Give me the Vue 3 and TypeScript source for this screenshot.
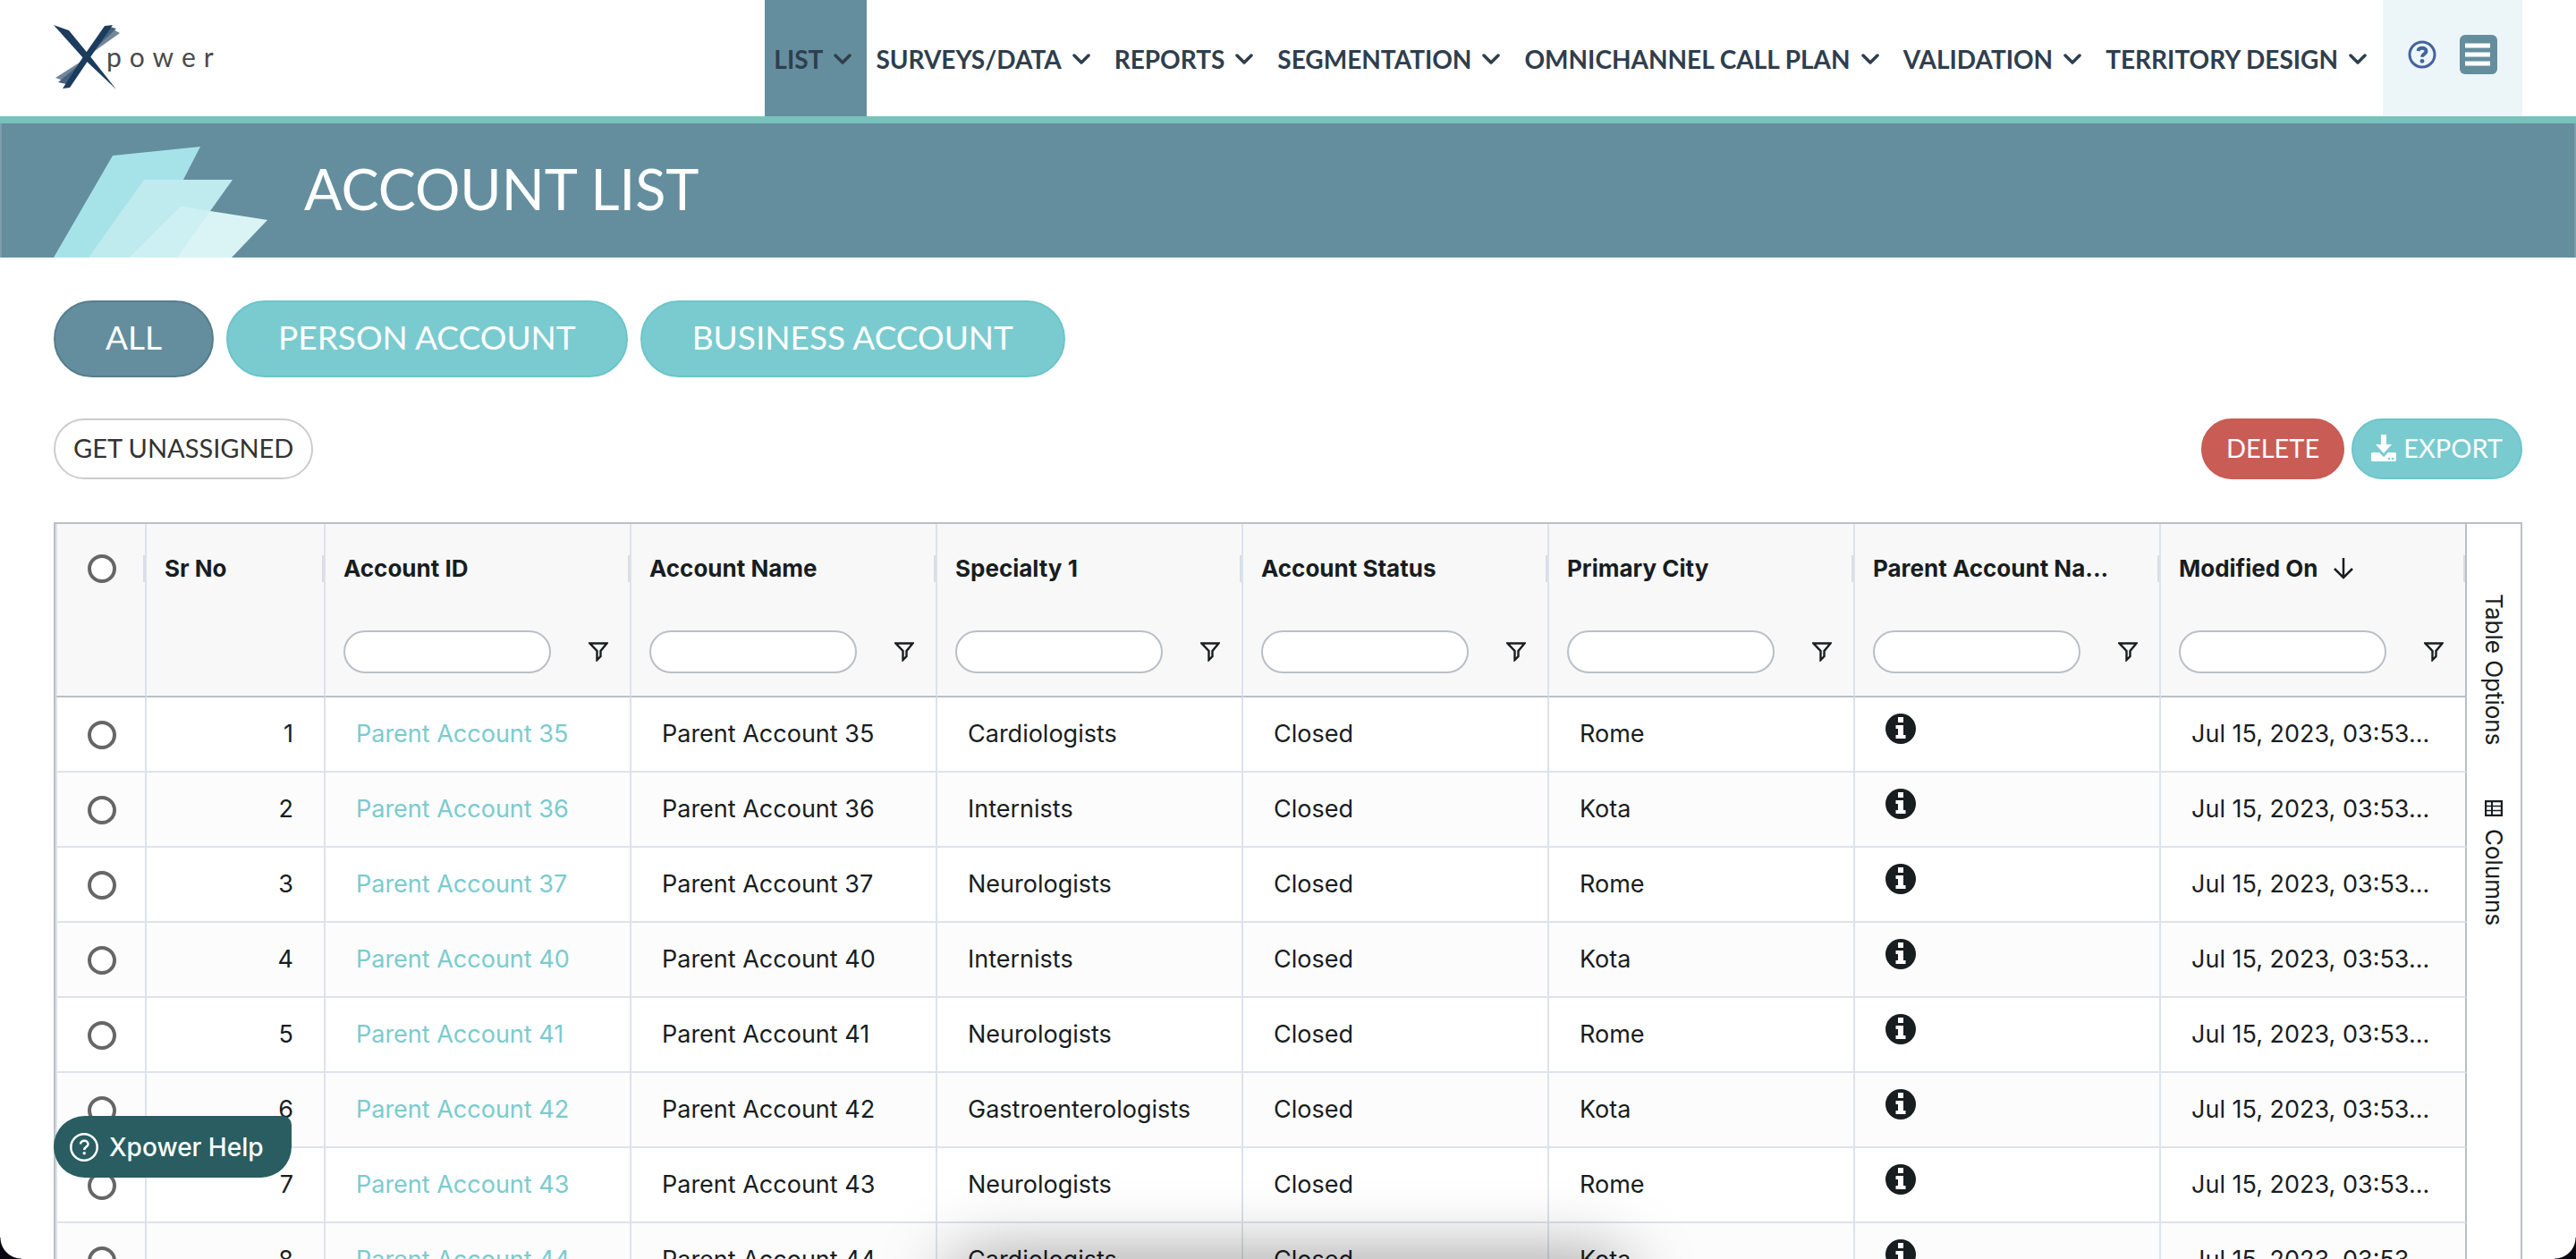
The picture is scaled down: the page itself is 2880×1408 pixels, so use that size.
<script setup lang="ts">
import { ref } from 'vue'

interface Account {
  id: number
  name: string
  specialty: string
  status: string
  city: string
  modified: string
}

const menu: string[] = [
  'LIST',
  'SURVEYS/DATA',
  'REPORTS',
  'SEGMENTATION',
  'OMNICHANNEL CALL PLAN',
  'VALIDATION',
  'TERRITORY DESIGN',
]

const tabs: string[] = ['ALL', 'PERSON ACCOUNT', 'BUSINESS ACCOUNT']
const activeTab = ref('ALL')

const columns: string[] = [
  'Account ID',
  'Account Name',
  'Specialty 1',
  'Account Status',
  'Primary City',
  'Parent Account Na...',
  'Modified On',
]

const modified = 'Jul 15, 2023, 03:53...'
const accounts: Account[] = [
  { id: 1, name: 'Parent Account 35', specialty: 'Cardiologists', status: 'Closed', city: 'Rome', modified },
  { id: 2, name: 'Parent Account 36', specialty: 'Internists', status: 'Closed', city: 'Kota', modified },
  { id: 3, name: 'Parent Account 37', specialty: 'Neurologists', status: 'Closed', city: 'Rome', modified },
  { id: 4, name: 'Parent Account 40', specialty: 'Internists', status: 'Closed', city: 'Kota', modified },
  { id: 5, name: 'Parent Account 41', specialty: 'Neurologists', status: 'Closed', city: 'Rome', modified },
  { id: 6, name: 'Parent Account 42', specialty: 'Gastroenterologists', status: 'Closed', city: 'Kota', modified },
  { id: 7, name: 'Parent Account 43', specialty: 'Neurologists', status: 'Closed', city: 'Rome', modified },
  { id: 8, name: 'Parent Account 44', specialty: 'Cardiologists', status: 'Closed', city: 'Kota', modified },
]
</script>

<template>
  <div class="page">
    <header class="topbar">
      <a href="#" class="logo" aria-label="Xpower">
        <svg width="190" height="76" viewBox="0 0 190 76">
          <path d="M36 36 L67 5 L74 9 Z" fill="#73879b" />
          <path d="M38 36 L2 59 L10 62 Z" fill="#73879b" />
          <path d="M37 35 L63 2 L70 4 Z" fill="#47617f" />
          <path d="M37 37 L5 64 L14 66 Z" fill="#47617f" />
          <path d="M0 0 L17 6 L40 34 L70 72 L34 38 Z" fill="#1c3c5d" />
          <path d="M34 34 L57 1 L66 0 L41 36 L18 70 L10 71 Z" fill="#1c3c5d" />
          <text class="logo-text" x="59" y="47">power</text>
        </svg>
      </a>
      <nav class="menu">
        <a v-for="(item, i) in menu" :key="item" href="#" class="menu-item" :class="{ active: i === 0 }">
          {{ item }}
          <svg width="20" height="12" viewBox="0 0 20 12">
            <path d="M2 2 L10 10 L18 2" fill="none" stroke="currentColor" stroke-width="3.500" stroke-linecap="round" stroke-linejoin="round" />
          </svg>
        </a>
      </nav>
      <div class="tools">
        <button type="button" class="icon-button" aria-label="Help">
          <svg width="32" height="32" viewBox="0 0 32 32">
            <circle cx="16" cy="16" r="14" fill="none" stroke="#43639c" stroke-width="3" />
            <path d="M11.500 12 C12 8 20.500 7.500 20.500 12.300 C20.500 15.500 16 15.500 16 18.800" fill="none" stroke="#43639c" stroke-width="4" />
            <circle cx="16" cy="23.300" r="2.400" fill="#43639c" />
          </svg>
        </button>
        <button type="button" class="icon-button" aria-label="Menu">
          <svg width="42" height="44" viewBox="0 0 42 44">
            <rect width="42" height="44" rx="6" fill="#648e9e" />
            <path d="M6 12 H34 M6 22 H34 M6 32 H34" stroke="#fff" stroke-width="5" />
          </svg>
        </button>
      </div>
    </header>

    <section class="banner">
      <svg class="banner-art" width="240" height="126" viewBox="0 0 240 126">
        <path d="M0 126 L66 12 L164 2 L100 126 Z" fill="#a5e3e9" />
        <path d="M39 126 L101 39 L200 39 L138 126 Z" fill="#bfebef" />
        <path d="M85 126 L142 69 L239 84 L199 126 Z" fill="#daf4f5" />
        <path d="M85 126 L142 69 L175 74 L138 126 Z" fill="#cdf0f2" />
      </svg>
      <h1>ACCOUNT LIST</h1>
    </section>

    <main class="content">
      <div class="tabs">
        <button
          v-for="tab in tabs"
          :key="tab"
          type="button"
          class="tab"
          :class="{ selected: tab === activeTab }"
          @click="activeTab = tab"
        >
          {{ tab }}
        </button>
      </div>

      <div class="actions">
        <button type="button" class="action plain">GET UNASSIGNED</button>
        <div class="action-group">
          <button type="button" class="action danger">DELETE</button>
          <button type="button" class="action export">
            <svg width="28" height="30" viewBox="0 0 28 30">
              <path d="M11 0 H17 V11 H23 L14 21 L5 11 H11 Z" fill="#fff" />
              <path d="M1.500 20 H9 L14 25 L19 20 H26.500 Q28 20 28 21.500 V28.500 Q28 30 26.500 30 H1.500 Q0 30 0 28.500 V21.500 Q0 20 1.500 20 Z" fill="#fff" />
              <circle cx="20" cy="27" r="1.200" fill="#7acbcf" />
              <circle cx="24" cy="27" r="1.200" fill="#7acbcf" />
            </svg>
            EXPORT
          </button>
        </div>
      </div>

      <div class="grid">
        <table>
          <colgroup>
            <col class="col-check" />
            <col class="col-number" />
            <col v-for="c in columns" :key="c" />
          </colgroup>
          <thead>
            <tr class="titles">
              <th class="check"><div class="handle"><input type="radio" name="all" aria-label="Select all" /></div></th>
              <th><div class="handle">Sr No</div></th>
              <th v-for="c in columns" :key="c">
                <div class="handle">
                  {{ c }}
                  <svg v-if="c === 'Modified On'" width="22" height="24" viewBox="0 0 22 24">
                    <path d="M11 0 V22 M1 12 L11 22 L21 12" fill="none" stroke="#181d1f" stroke-width="2.500" />
                  </svg>
                </div>
              </th>
            </tr>
            <tr class="filters">
              <td class="check"></td>
              <td></td>
              <td v-for="c in columns" :key="c">
                <div class="filter">
                  <input type="text" :aria-label="c + ' filter'" />
                  <button type="button" class="icon-button" :aria-label="'Filter ' + c">
                    <svg width="22" height="22" viewBox="0 0 22 22">
                      <path d="M1.500 1.500 H20.500 L13.500 10 V16 L9.500 20 V10 Z" fill="none" stroke="#181d1f" stroke-width="2.400" />
                    </svg>
                  </button>
                </div>
              </td>
            </tr>
          </thead>
          <tbody>
            <tr v-for="a in accounts" :key="a.id">
              <td class="check"><input type="radio" name="row" :aria-label="'Select ' + a.name" /></td>
              <td class="number">{{ a.id }}</td>
              <td><a href="#">{{ a.name }}</a></td>
              <td>{{ a.name }}</td>
              <td>{{ a.specialty }}</td>
              <td>{{ a.status }}</td>
              <td>{{ a.city }}</td>
              <td class="info">
                <svg width="34" height="34" viewBox="0 0 34 34">
                  <circle cx="17" cy="17" r="17" fill="#181d1f" />
                  <path d="M14 4 H20 V10 H14 Z M11.500 13 H20 V24 H22.500 V28 H11.500 V24 H14 V17 H11.500 Z" fill="#fff" />
                </svg>
              </td>
              <td>{{ a.modified }}</td>
            </tr>
          </tbody>
        </table>
        <aside class="side">
          <button type="button" class="side-button">Table Options</button>
          <button type="button" class="side-button">
            <svg width="20" height="18" viewBox="0 0 20 18">
              <path d="M1 1 H19 V17 H1 Z" fill="none" stroke="#181d1f" stroke-width="2.400" />
              <path d="M1 6.500 H19 M1 11.500 H19" stroke="#181d1f" stroke-width="1.500" />
              <path d="M8 1 V17" stroke="#181d1f" stroke-width="2" />
            </svg>
            Columns
          </button>
        </aside>
      </div>
    </main>

    <button type="button" class="help">
      <svg width="32" height="32" viewBox="0 0 32 32" fill="none" stroke="#fff">
        <circle cx="16" cy="16" r="14.700" stroke-width="2.500" />
        <path d="M12 12.500 C12 7.500 20.500 7.500 20.500 12.500 C20.500 15.500 16.200 15.500 16.200 19" stroke-width="2.500" />
        <circle cx="16.200" cy="22.800" r="1.700" fill="#fff" stroke="none" />
      </svg>
      Xpower Help
    </button>
    <div class="dock-shadow"></div>
    <div class="corner left"></div>
    <div class="corner right"></div>
  </div>
</template>

<style>
body {
  margin: 0;
  background: #fff;
}
</style>

<style scoped>
.page {
  position: relative;
  height: 100vh;
  overflow: hidden;
  background: #fff;
  color: #181d1f;
  font-family: Inter, "Liberation Sans", sans-serif;
}
* {
  box-sizing: border-box;
}
a {
  color: inherit;
  text-decoration: none;
}
button {
  margin: 0;
  font: inherit;
  color: inherit;
  white-space: nowrap;
  cursor: pointer;
}
svg {
  flex: none;
}
.icon-button {
  display: flex;
  padding: 0;
  border: 0;
  background: none;
}
.topbar {
  display: flex;
  height: 138px;
  padding: 0 60px;
  border-bottom: 8px solid #78c2bc;
}
.logo {
  display: flex;
  align-items: flex-start;
  margin-right: auto;
  padding-top: 28px;
}
.logo-text {
  font: 30px Lato, sans-serif;
  letter-spacing: 9px;
  fill: #4a4a4a;
}
.menu {
  display: flex;
  margin-right: 18px;
}
.menu-item {
  display: flex;
  align-items: center;
  gap: 12px;
  padding: 2px 17px 0 10px;
  color: #2f3e4d;
  font: 700 28px/32px Lato, sans-serif;
  white-space: nowrap;
}
.menu-item:last-child {
  padding-right: 0;
}
.menu-item.active {
  background: #648e9e;
}
.tools {
  display: flex;
  align-items: center;
  gap: 26px;
  padding: 0 28px 8px;
  background: #ecf5f8;
}
.banner {
  display: flex;
  align-items: center;
  gap: 40px;
  height: 150px;
  padding: 0 58px;
  border: solid #7d9fad;
  border-width: 0 2px;
  background: #648e9e;
}
.banner-art {
  align-self: flex-end;
}
h1 {
  margin: 0;
  padding-bottom: 4px;
  color: #fff;
  font: 400 63px/76px Lato, sans-serif;
}
.content {
  padding: 48px 60px 0;
}
.tabs {
  display: flex;
  gap: 14px;
}
.tab {
  height: 86px;
  padding: 0 56px 4px;
  border: 2px solid #6bc5ca;
  border-radius: 43px;
  background: #7acbcf;
  color: #fff;
  font: 400 37px/44px Lato, sans-serif;
}
.tab.selected {
  border-color: #577d8c;
  background: #648e9e;
}
.actions {
  display: flex;
  justify-content: space-between;
  margin: 46px 0 48px;
}
.action-group {
  display: flex;
  gap: 8px;
}
.action {
  display: flex;
  align-items: center;
  gap: 8px;
  height: 68px;
  padding: 0 20px 2px;
  border: 2px solid #ccc;
  border-radius: 34px;
  background: #fff;
  color: #333;
  font: 400 29px/32px Lato, sans-serif;
}
.action.danger {
  padding: 0 26px 2px;
  border-color: #c95c54;
  background: #c95c54;
  color: #fff;
}
.action.export {
  border-color: #6bc5ca;
  background: #7acbcf;
  color: #fff;
}
.grid {
  display: grid;
  grid-template-columns: minmax(0, 1fr) 60px;
  border: 2px solid #babfc7;
}
table {
  width: 100%;
  table-layout: fixed;
  border-spacing: 0;
  font-size: 27px;
  line-height: 32px;
}
.col-check {
  width: 102px;
}
.col-number {
  width: 200px;
}
td,
th {
  height: 84px;
  padding: 0 34px;
  border-right: 2px solid #dde2eb;
  border-bottom: 2px solid #dde2eb;
  text-align: left;
  white-space: nowrap;
}
td:last-child,
th:last-child {
  border-right-color: #babfc7;
}
.check {
  padding: 0 0 0 2px;
  border-left: 2px solid #dde2eb;
}
td.check {
  text-align: center;
}
.number {
  text-align: right;
}
thead {
  background: #f8f8f8;
}
.titles th {
  height: 100px;
  padding: 0;
  border-bottom: 0;
  font-size: 26px;
  font-weight: 700;
}
.handle {
  display: flex;
  align-items: center;
  gap: 18px;
  height: 30px;
  padding-left: 20px;
  border-right: 2px solid #dadde3;
}
.check .handle {
  justify-content: center;
  padding: 0 0 0 4px;
}
.filters td {
  height: 94px;
  padding: 0 24px 6px 20px;
  border-bottom-color: #babfc7;
}
.filter {
  display: flex;
  align-items: center;
  gap: 42px;
}
.filter input {
  flex: 1;
  min-width: 0;
  height: 48px;
  padding: 0 16px;
  border: 2px solid #babfc7;
  border-radius: 24px;
  background: #fff;
  font: inherit;
}
input[type="radio"] {
  appearance: none;
  flex: none;
  width: 32px;
  height: 32px;
  margin: 0;
  border: 4px solid #666;
  border-radius: 50%;
  background: #fff;
  vertical-align: middle;
}
tbody tr:nth-child(even) {
  background: #fcfcfc;
}
tbody a {
  color: #7acbcf;
}
.info {
  padding-bottom: 12px;
}
.info svg {
  vertical-align: middle;
}
.side {
  display: flex;
  flex-direction: column;
  gap: 62px;
  padding-top: 78px;
}
.side-button {
  display: flex;
  align-items: center;
  gap: 14px;
  width: 60px;
  padding: 0;
  border: 0;
  background: none;
  font-size: 26px;
  line-height: 60px;
  writing-mode: vertical-rl;
}
.help {
  position: fixed;
  left: 60px;
  bottom: 91px;
  display: flex;
  align-items: center;
  gap: 12px;
  height: 69px;
  padding: 0 31px 0 18px;
  border: 0;
  border-radius: 35px 10px 35px 35px;
  background: #295d61;
  color: #fff;
  font-size: 28px;
  font-weight: 500;
}
.dock-shadow {
  position: fixed;
  top: 100%;
  left: 37%;
  right: 37%;
  height: 80px;
  box-shadow: 0 0 80px rgba(0, 0, 0, 0.4);
}
.corner {
  position: fixed;
  bottom: 0;
  width: 24px;
  height: 24px;
}
.corner.left {
  left: 0;
  background: radial-gradient(circle at 100% 0, transparent 23px, #0a0612 24px);
}
.corner.right {
  right: 0;
  background: radial-gradient(circle at 0 0, transparent 23px, #0a0612 24px);
}
</style>
